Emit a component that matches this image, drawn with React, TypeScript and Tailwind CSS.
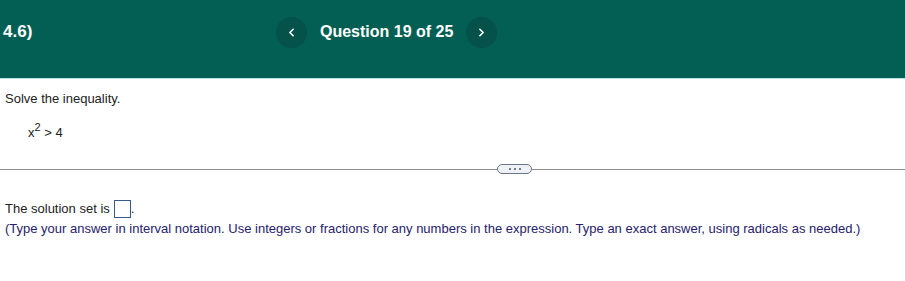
import { ChevronLeft, ChevronRight } from "lucide-react";

export default function App() {
  return (
    <div className="h-[281px] w-[905px] overflow-hidden bg-white font-['Liberation_Sans',Arial,sans-serif]">
      <header className="flex h-[78px] items-center bg-[#035f54] border-b border-[#b8e3dc] box-content">
        <div className="w-[276px] pl-[3px] pb-[14px] text-[17px] font-bold text-white">4.6)</div>
        <div className="flex items-center pb-[14px]">
          <button className="flex h-[31px] w-[31px] items-center justify-center rounded-full bg-[#04524a] text-white">
            <ChevronLeft size={13} strokeWidth={3} />
          </button>
          <div className="mx-[13px] text-[16px] font-bold text-white">Question 19 of 25</div>
          <button className="flex h-[31px] w-[31px] items-center justify-center rounded-full bg-[#04524a] text-white">
            <ChevronRight size={13} strokeWidth={3} />
          </button>
        </div>
      </header>

      <section className="px-[5px] pt-[10px] text-[13px] text-[#222]">
        <p>Solve the inequality.</p>
        <p className="mt-[14px] pl-[23px]">
          x<sup className="text-[11px]">2</sup> &gt; 4
        </p>
      </section>

      <div className="mt-[22px] flex items-center">
        <div className="h-px flex-1 bg-[#8c8c8c]" />
        <div className="flex h-[10px] w-[35px] items-center justify-center gap-[3px] rounded-full border border-[#6a7585] bg-[#eef2f7]">
          <span className="h-[2px] w-[2px] rounded-full bg-[#4a5566]" />
          <span className="h-[2px] w-[2px] rounded-full bg-[#4a5566]" />
          <span className="h-[2px] w-[2px] rounded-full bg-[#4a5566]" />
        </div>
        <div className="h-px w-[373px] bg-[#8c8c8c]" />
      </div>

      <section className="px-[5px] pt-[25px] text-[13px]">
        <p className="flex items-center text-[#222]">
          The solution set is
          <span className="ml-[4px] inline-block h-[18px] w-[17px] border border-[#36598e]" />
          <span>.</span>
        </p>
        <p className="mt-0 text-[#26226b]">
          (Type your answer in interval notation. Use integers or fractions for any numbers in the expression. Type an exact answer, using radicals as needed.)
        </p>
      </section>
    </div>
  );
}
